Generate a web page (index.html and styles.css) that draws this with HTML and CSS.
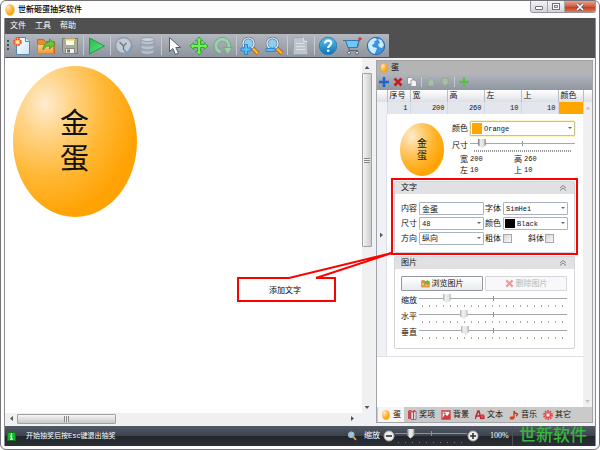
FILE: index.html
```html
<!DOCTYPE html>
<html lang="zh-CN">
<head>
<meta charset="utf-8">
<title>世新砸蛋抽奖软件</title>
<link rel="stylesheet" href="styles.css">
</head>
<body>
<svg class="defs" aria-hidden="true">
  <defs>
    <radialGradient id="egg" cx="0.26" cy="0.25" r="0.75" fx="0.26" fy="0.25"><stop offset="0" stop-color="#ffedcf"/><stop offset="0.25" stop-color="#ffd68f"/><stop offset="0.65" stop-color="#ffb733"/><stop offset="1" stop-color="#ffa305"/></radialGradient>
    <linearGradient id="blue" x2="0" y2="1"><stop offset="0" stop-color="#5cc4ee"/><stop offset="1" stop-color="#0b6fb4"/></linearGradient>
    <linearGradient id="folder" x2="0" y2="1"><stop offset="0" stop-color="#ffd28a"/><stop offset="1" stop-color="#f2983a"/></linearGradient>
    <linearGradient id="play" x2="1" y2="1"><stop offset="0" stop-color="#2fb54c"/><stop offset="1" stop-color="#5fe884"/></linearGradient>
    <linearGradient id="paper" x2="1" y2="1"><stop offset="0" stop-color="#ffffff"/><stop offset="1" stop-color="#cfe4f6"/></linearGradient>
    <symbol id="i-egg" viewBox="0 0 10 12"><ellipse cx="5" cy="6" rx="4.3" ry="5.5" fill="url(#egg)" stroke="#f09a10" stroke-width=".4"/></symbol>
    <symbol id="i-open" viewBox="0 0 20 20"><path d="M1.500 3.500h6l1.500 2h9.500v12h-17z" fill="#e98c2f" stroke="#c96c18"/><path d="M1.500 8.500h16v9h-16z" fill="url(#folder)" stroke="#dd8426"/><path d="M7 14c0-5 3-8 6.500-8V3l6 5-6 5v-3.200c-3 0-4.500 1.200-6.500 4.200z" fill="#62c838" stroke="#3b9425" stroke-width=".8"/></symbol>
    <symbol id="i-x" viewBox="0 0 10 10"><path d="M1.500 1.500 8.500 8.500M8.500 1.500 1.500 8.500" stroke="currentColor" stroke-width="2.500"/></symbol>
    <symbol id="i-up" viewBox="0 0 8 6"><path d="M1 3 4 .5 7 3M1 5.500 4 3 7 5.500" fill="none" stroke="#777" stroke-width=".9"/></symbol>
    <symbol id="i-lens" viewBox="0 0 20 20"><path d="m12.500 12 5.500 5.500" stroke="#b35f10" stroke-width="4"/><path d="m12.800 12.300 5 5" stroke="#ffb52e" stroke-width="2.500"/><circle cx="8.500" cy="7.500" r="5.500" fill="#8ccdf5" stroke="#607587" stroke-width="2.400"/><circle cx="8.500" cy="7.500" r="5.500" fill="none" stroke="#edf5fa" stroke-width="1.200"/></symbol>
  </defs>
</svg>
<div class="window">
  <header class="titlebar">
    <svg class="app-icon"><use href="#i-egg"/></svg>
    <h1>世新砸蛋抽奖软件</h1>
    <div class="caption">
      <button aria-label="最小化"><svg viewBox="0 0 16 12"><rect x="4.500" y="5.500" width="7" height="3" rx=".5" fill="#fff" stroke="#6d6e7a"/></svg></button>
      <button aria-label="最大化"><svg viewBox="0 0 16 12"><rect x="4.500" y="2.500" width="7" height="6" fill="#fff" stroke="#6d6e7a"/><rect x="6.500" y="4.500" width="3" height="2" fill="#ddd" stroke="#6d6e7a" stroke-width=".8"/></svg></button>
      <button class="close" aria-label="关闭"><svg viewBox="0 0 16 12"><path d="m5 3 6 6m0-6-6 6" stroke="#555065" stroke-width="3"/><path d="m5 3 6 6m0-6-6 6" stroke="#fff" stroke-width="1.700"/></svg></button>
    </div>
  </header>
  <div class="client">
    <nav class="menu"><button>文件</button><button>工具</button><button>帮助</button></nav>
    <div class="toolstrip">
      <div class="toolbar">
        <i class="grip"></i>
        <button aria-label="新建"><svg viewBox="0 0 20 20"><path d="M4.500 1.500h9l4 4v13h-13z" fill="url(#paper)" stroke="#5b84ad"/><path d="M13.500 1.500v4h4" fill="#dcebf8" stroke="#5b84ad"/><circle cx="5.500" cy="6" r="3.300" fill="#ffc53a" stroke="#f04e37" stroke-width="2" stroke-dasharray="1.800 .8"/><circle cx="5.500" cy="6" r="1.500" fill="#fff4a8"/></svg></button>
        <button aria-label="打开"><svg><use href="#i-open"/></svg></button>
        <button aria-label="保存"><svg viewBox="0 0 20 20"><path d="M2.500 2.500h15v15h-13l-2-2z" fill="#a9aca0" stroke="#777b73"/><path d="M5.500 2.500h9v7h-9z" fill="#fffef0" stroke="#b8a870"/><path d="M5 3h10v1.500H5z" fill="#f2cf54"/><path d="M5.500 12.500h9v5h-9z" fill="#f0f0ec" stroke="#85897f"/><path d="M7 13.500h3v3H7z" fill="#6e736b"/></svg></button>
        <i class="sep"></i>
        <button aria-label="开始"><svg viewBox="0 0 20 20"><path d="M2.500 2 17.500 10 2.500 18z" fill="url(#play)" stroke="#1d9a49"/></svg></button>
        <i class="sep"></i>
        <button aria-label="历史"><svg viewBox="0 0 20 20"><circle cx="9.500" cy="9.500" r="8" fill="#c2cad3" stroke="#909aa5" stroke-width="1.500"/><path d="m5.500 6 4 4 3-3M9.500 10v4" fill="none" stroke="#65778a" stroke-width="1.300"/><path d="m10 14 3 3.500 6-8" fill="none" stroke="#7d9cc0" stroke-width="2"/></svg></button>
        <button aria-label="数据"><svg viewBox="0 0 20 20"><g fill="#b9c3ce" stroke="#929dab"><path d="M3 13.500v2.500c0 3 13 3 13 0v-2.500z"/><ellipse cx="9.500" cy="13" rx="6.500" ry="2"/><path d="M3 8.500v3c0 3 13 3 13 0v-3z"/><ellipse cx="9.500" cy="8" rx="6.500" ry="2"/><path d="M3 3.500v3c0 3 13 3 13 0v-3z"/><ellipse cx="9.500" cy="3.500" rx="6.500" ry="2" fill="#cbd3dc"/></g></svg></button>
        <i class="sep"></i>
        <button aria-label="选择"><svg viewBox="0 0 20 20"><path d="M4.500 1.500v14l3.300-3 2.700 6 3-1.400-2.700-5.600h4.700z" fill="#fff" stroke="#4c5c70"/></svg></button>
        <button aria-label="移动"><svg viewBox="0 0 20 20"><path d="m10 1 3.500 3.800h-2v3.700h3.700v-2L19 10l-3.800 3.500v-2h-3.700v3.700h2L10 19l-3.500-3.800h2v-3.700H4.800v2L1 10l3.800-3.500v2h3.700V4.800h-2z" fill="#6df24f" stroke="#279d31" stroke-width=".9"/></svg></button>
        <button aria-label="旋转"><svg viewBox="0 0 20 20"><path d="M7.500 16A6.500 6.500 0 1 1 15.500 12" fill="none" stroke="#6fa480" stroke-width="4.500"/><path d="M7.500 16A6.500 6.500 0 1 1 15.500 12" fill="none" stroke="#a0cfab" stroke-width="3"/><path d="M10.500 11.500H19.500L14.500 18.500z" fill="#a0cfab" stroke="#6fa480" stroke-width=".8"/></svg></button>
        <i class="sep"></i>
        <button aria-label="放大"><svg viewBox="0 0 20 20"><use href="#i-lens"/><path d="M4.500 8.500h3v3.500H11v3H7.500v3.500h-3V15H1v-3h3.500z" fill="#58bdf5" stroke="#2876bd" stroke-width=".8"/></svg></button>
        <button aria-label="缩小"><svg viewBox="0 0 20 20"><use href="#i-lens"/><path d="M2 12.500h9v3H2z" fill="#58bdf5" stroke="#2876bd" stroke-width=".8"/></svg></button>
        <i class="sep"></i>
        <button aria-label="文档"><svg viewBox="0 0 20 20"><path d="M2.500 1.500h10l4 4v13h-14z" fill="#bdc4cd" stroke="#9ba5b0"/><path d="M12.500 1.500v4h4M5 7.500h8M5 10.500h9M5 13.500h9" fill="none" stroke="#dce1e6"/></svg></button>
        <i class="sep"></i>
        <button aria-label="说明"><svg viewBox="0 0 20 20"><circle cx="10" cy="10" r="8.700" fill="url(#blue)" stroke="#2584bb"/><path d="M7 7.500c0-4 6.200-3.600 6.200-.4 0 2.300-3 2.300-3 5" fill="none" stroke="#fff" stroke-width="2.200"/><circle cx="10.200" cy="14.800" r="1.300" fill="#fff"/></svg></button>
        <button aria-label="购买"><svg viewBox="0 0 20 20"><path d="M1 4.500h3l3.500 10h8.500" fill="none" stroke="#5c6877" stroke-width="1.200"/><path d="M3.500 4.500H17L15 11.500H6z" fill="#6fc7f5" stroke="#3479b5"/><path d="m15.500 11.500 2-8.500" stroke="#5c6877"/><circle cx="18" cy="2.800" r="1.600" fill="#e12e22"/><circle cx="7" cy="16.800" r="1.500" fill="#eee" stroke="#5c6877"/><circle cx="15" cy="16.800" r="1.500" fill="#eee" stroke="#5c6877"/></svg></button>
        <button aria-label="网站"><svg viewBox="0 0 20 20"><circle cx="10" cy="10" r="8.700" fill="#3b91e0" stroke="#2f6cae"/><path d="M2 9C2.500 5 6 2 9.500 2l1.500 2-3 1.500L9 7 6 9l1 2 4 1-1 3-1.500 3C5 17 2.500 14 2 9zM12 3l3.500 1L18 9l-2 3-3-1-1-3 2-1z" fill="#c9ecfa"/></svg></button>
      </div>
    </div>
    <main class="workspace">
      <section class="canvas">
        <div class="page">
          <div class="golden-egg"><svg viewBox="0 0 124 151" preserveAspectRatio="none"><ellipse cx="62" cy="75.500" rx="62" ry="75.500" fill="url(#egg)"/></svg><span>金蛋</span></div>
        </div>
        <div class="vscroll"><i class="tri up"></i><div class="thumb"><i></i></div><i class="tri down"></i></div>
        <div class="hscroll"><i class="tri left"></i><div class="thumb"><i></i></div><i class="tri right"></i></div>
      </section>
      <aside class="panel">
        <h2><svg><use href="#i-egg"/></svg>蛋</h2>
        <div class="panel-tools">
          <button aria-label="添加"><svg viewBox="0 0 10 10"><path d="M5 0v10M0 5h10" stroke="#1f63cf" stroke-width="2.600"/></svg></button>
          <button class="red" aria-label="删除"><svg><use href="#i-x"/></svg></button>
          <button aria-label="复制"><svg viewBox="0 0 10 10"><g fill="#f5f5f5" stroke="#8f8f8f" stroke-width=".8"><path d="M.5.500h4l1.500 1.500v5H.5z"/><path d="M4 3h3.500L9.500 5v4.500H4z"/></g></svg></button>
          <i class="sep"></i>
          <button aria-label="上移"><svg viewBox="0 0 10 10"><path d="m5 1 4 4H8v4H2V5H1z" fill="#a9bda7" stroke="#8ba48a" stroke-width=".8"/></svg></button>
          <button aria-label="下移"><svg viewBox="0 0 10 10"><path d="M5 9 1 5h1V1h6v4h1z" fill="#a9bda7" stroke="#8ba48a" stroke-width=".8"/></svg></button>
          <i class="sep"></i>
          <button aria-label="移动"><svg viewBox="0 0 10 10"><path d="M5 1v8M1 5h8" stroke="#55c33b" stroke-width="2"/><path d="m5 0 2 2H3zM5 10 3 8h4zM0 5l2-2v4zM10 5 8 7V3z" fill="#55c33b"/></svg></button>
        </div>
        <table>
          <colgroup><col class="c-edge"><col class="c-no"><col><col><col><col><col class="c-color"><col class="c-end"></colgroup>
          <thead><tr><th></th><th>序号</th><th>宽</th><th>高</th><th>左</th><th>上</th><th>颜色</th><th></th></tr></thead>
          <tbody><tr><td class="edge"></td><td>1</td><td>200</td><td>260</td><td>10</td><td>10</td><td class="orange"></td><td class="end"><i class="tri up"></i></td></tr></tbody>
        </table>
        <div class="panel-body">
          <div class="detail">
            <div class="strip"><i class="tri right"></i></div>
            <div class="form">
              <div class="egg-form">
                <div class="mini-egg"><svg viewBox="0 0 124 151" preserveAspectRatio="none"><ellipse cx="62" cy="75.500" rx="62" ry="75.500" fill="url(#egg)"/></svg><span>金蛋</span></div>
                <div class="egg-fields">
                  <div class="line"><label for="egg-color">颜色</label><span class="pick tall"><i class="swatch orange"></i><select id="egg-color" class="with-swatch"><option>Orange</option></select></span></div>
                  <div class="line"><label for="egg-size">尺寸</label><input class="range fine" id="egg-size" type="range" value="8"></div>
                  <dl><dt>宽</dt><dd>200</dd><dt>高</dt><dd>260</dd><dt>左</dt><dd>10</dd><dt>上</dt><dd>10</dd></dl>
                </div>
              </div>
              <section class="group">
                <h3>文字<svg><use href="#i-up"/></svg></h3>
                <div class="text-fields">
                  <label for="t-content">内容</label><input id="t-content" type="text" value="金蛋">
                  <label for="t-font">字体</label><span class="pick"><select id="t-font"><option>SimHei</option></select></span>
                  <label for="t-size">尺寸</label><span class="pick"><select id="t-size"><option>48</option></select></span>
                  <label for="t-color">颜色</label><span class="pick"><i class="swatch black"></i><select id="t-color" class="with-swatch"><option>Black</option></select></span>
                  <label for="t-dir">方向</label><span class="pick"><select id="t-dir" class="cjk"><option>纵向</option></select></span>
                  <label for="t-bold">粗体</label><div class="checks"><input id="t-bold" type="checkbox"><label for="t-italic">斜体</label><input id="t-italic" type="checkbox"></div>
                </div>
              </section>
              <section class="group">
                <h3>图片<svg><use href="#i-up"/></svg></h3>
                <div class="picture-fields">
                  <div class="buttons"><button><svg><use href="#i-open"/></svg>浏览图片</button><button disabled><svg><use href="#i-x"/></svg>删除图片</button></div>
                  <div class="line"><label for="p-zoom">缩放</label><input class="range" id="p-zoom" type="range" value="17" disabled></div>
                  <div class="line"><label for="p-x">水平</label><input class="range" id="p-x" type="range" value="29" disabled></div>
                  <div class="line"><label for="p-y">垂直</label><input class="range" id="p-y" type="range" value="30" disabled></div>
                </div>
              </section>
            </div>
          </div>
          <div class="panel-scroll"><i class="tri down"></i></div>
        </div>
        <div class="tabs">
          <button class="on"><svg><use href="#i-egg"/></svg>蛋</button>
          <button><svg viewBox="0 0 10 10"><path d="M1 2h3v7H1z" fill="#d8443e"/><path d="M4 1.500h5v8H4z" fill="#e9edf5" stroke="#4c6ca0" stroke-width=".8"/><path d="M6.500 1.500v8M1 2l2-1.500 3 1.500 2-2" fill="none" stroke="#d43a36" stroke-width="1.300"/></svg>奖项</button>
          <button><svg viewBox="0 0 10 10"><path d="M1 1h8v8H1z" fill="#fff" stroke="#d13d3d" stroke-width="1.300"/><path d="m1 9 3-5 2 2 3-3v6zM2.500 2.500h2V4h-2z" fill="#d13d3d"/></svg>背景</button>
          <button><svg viewBox="0 0 10 10"><path d="M0 9 3 1h1l2 8M1 6h4" fill="none" stroke="#c2272d" stroke-width="1.500"/><path d="M6 5.500q3-1.500 3 1V9M9 7q-3-.5-3 1 .5 1.500 3 0" fill="none" stroke="#c2272d" stroke-width="1.200"/></svg>文本</button>
          <button><svg viewBox="0 0 10 10"><ellipse cx="3" cy="8" rx="2.500" ry="1.800" fill="#e0421e"/><path d="M5 8V1q.5 2.500 3.500 3-.5 2-1.500 2" fill="none" stroke="#c92f1a" stroke-width="1.300"/></svg>音乐</button>
          <button><svg viewBox="0 0 10 10"><circle cx="5" cy="5" r="4" fill="none" stroke="#dc4848" stroke-width="1.800" stroke-dasharray="1.600 .9"/><circle cx="5" cy="5" r="2.500" fill="#f7b5b1" stroke="#dc4848" stroke-width="1.200"/><circle cx="5" cy="5" r="1" fill="#fff"/></svg>其它</button>
        </div>
        <svg class="callout" viewBox="0 0 346 130"><g fill="none" stroke="#f00" stroke-width="2"><rect x="156" y="2" width="185" height="75"/><path d="M53 101H2v23h97v-23H80L156 76z" fill="#fff"/></g><text x="33" y="116">添加文字</text></svg>
      </aside>
    </main>
    <footer class="status">
      <svg class="info" viewBox="0 0 10 10"><path d="M.5.500h9v9h-9z" fill="#10b828" stroke="#087c18"/><path d="M5 1.500v1.500M3.500 4.500H5V8M3.500 8h3" fill="none" stroke="#fff" stroke-width="1.400"/></svg>
      <p>开始抽奖后按Esc键退出抽奖</p>
      <svg class="lens"><use href="#i-lens"/></svg>
      <label for="zoom">缩放</label>
      <button aria-label="缩小"><svg viewBox="0 0 12 12"><circle cx="6" cy="6" r="5" fill="#eee" stroke="#aaa"/><path d="M3 6h6" stroke="#333" stroke-width="1.600"/></svg></button>
      <input class="range zoom" id="zoom" type="range" value="18">
      <button aria-label="放大"><svg viewBox="0 0 12 12"><circle cx="6" cy="6" r="5" fill="#eee" stroke="#aaa"/><path d="M3 6h6M6 3v6" stroke="#333" stroke-width="1.600"/></svg></button>
      <output for="zoom">100%</output>
      <strong>世新软件</strong>
    </footer>
  </div>
</div>
</body>
</html>
```
FILE: styles.css
```css
* { box-sizing: border-box; }

body, h1, h2, h3, p, dl, dd { margin: 0; }

body, button, input, select {
  font-family: "Liberation Sans", "Noto Sans CJK SC", sans-serif;
  font-size: 8px;
  line-height: 10px;
  color: #111;
}

body { background: #fff; }
h1, h2, h3 { font-size: 8px; font-weight: 400; }
button { border: 0; padding: 0; background: none; }
svg { display: block; flex: none; }
.defs { position: absolute; width: 0; height: 0; }

.window {
  display: flex;
  flex-direction: column;
  min-height: 100vh;
  padding: 0 3px 3px;
  border: 1px solid #747478;
  border-radius: 6px;
  background: #fdfdfd;
}

/* Title bar */
.titlebar { display: flex; align-items: center; height: 17px; padding-left: 1px; }
.app-icon { width: 10px; height: 12px; margin-right: 3px; }
.titlebar h1 { flex: 1; font-weight: 500; color: #000; }
.caption {
  display: flex;
  align-self: flex-start;
  height: 12px;
  border: 1px solid #96969c;
  border-top: 0;
  border-radius: 0 0 3px 3px;
  overflow: hidden;
}
.caption button { width: 17px; border-right: 1px solid #a5a5ab; background: linear-gradient(#f4f4f6, #d3d3da); }
.caption button svg { width: 16px; height: 12px; }
.caption .close { width: 30px; border: 0; background: linear-gradient(#e9a394, #d05a40 50%, #c13b20 55%, #de7a55); }
.close svg { margin: 0 auto; }

.client {
  display: flex;
  flex: 1;
  flex-direction: column;
  border: 1px solid #8c8c90;
  border-width: 0 1px;
}

/* Menu and toolbar */
.menu { display: flex; gap: 9px; height: 16px; padding-left: 5px; background: #505050; }
.menu button { color: #fff; }
.toolstrip { display: flex; height: 24px; background: #505050; border-bottom: 1px solid #465362; }
.toolbar {
  display: flex;
  align-items: center;
  gap: 4px;
  width: 384px;
  padding-left: 2px;
  background: linear-gradient(#b3b7bf, #8e959f);
}
.toolbar svg { width: 20px; height: 20px; }
.grip {
  width: 2px;
  height: 12px;
  margin-right: -1px;
  background: repeating-linear-gradient(#444a52 0 2px, transparent 2px 4px);
}
.sep { width: 1px; height: 19px; margin: 0 -1px; background: #c6cad0; }

/* Triangular arrows */
.tri { display: block; width: 5px; height: 3px; background: #505866; clip-path: polygon(50% 0, 100% 100%, 0 100%); }
.tri.down { clip-path: polygon(0 0, 100% 0, 50% 100%); }
.tri.left, .tri.right { width: 3px; height: 5px; }
.tri.left { clip-path: polygon(100% 0, 100% 100%, 0 50%); }
.tri.right { clip-path: polygon(0 0, 100% 50%, 0 100%); }

/* Canvas */
.workspace { display: flex; flex: 1; gap: 4px; padding-right: 2px; background: #f0f1f4; }
.canvas { display: grid; flex: 1; grid-template: 1fr 11px 2px / 1fr 10px; }
.page { padding: 8px; background: #fff; }
.golden-egg, .mini-egg { display: grid; place-items: center; }
.golden-egg > *, .mini-egg > * { grid-area: 1 / 1; }
.golden-egg { width: 124px; height: 151px; }
.golden-egg svg { width: 124px; height: 151px; }
.golden-egg span { width: 30px; font-size: 29px; line-height: 35px; }
.vscroll, .hscroll { display: flex; align-items: center; background: #f0f0f0; }
.vscroll { flex-direction: column; padding: 8px 0 4px; }
.vscroll .thumb { flex: 0 0 174px; width: 10px; margin-top: 4px; margin-bottom: auto; background: linear-gradient(90deg, #f4f4f4, #ccc); }
.hscroll { padding: 0 8px 0 5px; }
.hscroll .thumb { flex: 0 0 99px; height: 10px; margin-left: 4px; margin-right: auto; background: linear-gradient(#f6f6f6, #c8c8c8); }
.thumb { display: grid; place-items: center; border: 1px solid #a2a2a2; border-radius: 1px; }
.vscroll .thumb i { width: 6px; height: 5px; background: repeating-linear-gradient(#888 0 1px, #eee 1px 2px); }
.hscroll .thumb i { width: 5px; height: 6px; background: repeating-linear-gradient(90deg, #888 0 1px, #eee 1px 2px); }

/* Property panel */
.panel {
  position: relative;
  display: flex;
  flex-direction: column;
  width: 217px;
  margin: 2px 0 3px;
  border: 1px solid #a4a4a4;
  background: #fff;
}
.panel h2 { display: flex; align-items: center; gap: 3px; height: 13px; padding-left: 3px; background: #b4b4b4; }
.panel h2 svg { width: 8px; height: 10px; }
.panel-tools { display: flex; align-items: center; gap: 4px; height: 16px; padding-left: 2px; background: linear-gradient(#b1b4bb, #8f96a1); }
.panel-tools svg { width: 10px; height: 10px; }
.panel-tools .sep { height: 10px; margin: 0; }
.red { color: #c81d20; }

table { width: 100%; table-layout: fixed; border-collapse: collapse; }
.c-edge { width: 10px; }
.c-no { width: 23px; }
.c-color { width: 25px; }
.c-end { width: 9px; }
th, td { height: 12px; padding: 0 2px; line-height: 10px; font-weight: 400; }
th { text-align: left; border-right: 1px solid #b9bdc6; background: linear-gradient(#fff, #dddfe5); white-space: nowrap; }
th:last-child { border: 0; }
td { text-align: right; font-family: "Liberation Mono", monospace; font-size: 7px; background: #e4e6ed; border-right: 1px solid #d5d8e2; }
td.edge { background: #eef0f6; }
td.end { border: 0; background: #f0f0f0; }
.orange, td.orange { background: #ffa500; }
.black { background: #000; }

.panel-body { display: flex; flex: 1; align-items: flex-start; }
.detail { display: flex; flex: 1; min-width: 0; border-bottom: 1px solid #dfe0e8; }
.strip { display: grid; place-items: center; width: 10px; background: #eff1f6; border-right: 1px solid #dfe0e8; }
.form { flex: 1; min-width: 0; padding: 7px 8px 7px 7px; }
.panel-scroll { display: flex; align-self: stretch; align-items: flex-end; justify-content: center; width: 9px; padding-bottom: 4px; background: #f0f0f0; }
.panel-scroll .tri, td .tri { background: #c4c4c4; }

.egg-form { display: flex; gap: 8px; padding-left: 6px; height: 60px; }
.mini-egg { width: 44px; height: 53px; margin-top: 2px; }
.mini-egg svg { width: 44px; height: 53px; }
.mini-egg span { width: 10px; font-size: 10px; line-height: 12px; }
.egg-fields { flex: 1; min-width: 0; }
.line { display: flex; align-items: center; }
.line label { width: 18px; white-space: nowrap; }
.egg-fields .line:first-child { height: 15px; margin-bottom: 2px; }
dl { display: grid; grid-template-columns: 18px 44px 10px 1fr; line-height: 11px; }
dt { padding-right: 2px; text-align: right; }
dd { font-family: "Liberation Mono", monospace; font-size: 7px; }
dt, dd { height: 11px; }

/* Form controls */
.pick { position: relative; display: block; flex: 1; min-width: 0; }
.pick::after {
  content: "";
  position: absolute;
  top: 5px;
  right: 3px;
  width: 4px;
  height: 2px;
  background: #666;
  clip-path: polygon(0 0, 100% 0, 50% 100%);
  pointer-events: none;
}
.pick.tall::after { top: 6px; }
select, input[type="text"] {
  display: block;
  width: 100%;
  height: 13px;
  padding: 0 2px;
  border: 1px solid #a9b3c2;
  border-radius: 1px;
  background: #fff;
  appearance: none;
}
select { font-family: "Liberation Mono", "Noto Sans CJK SC", monospace; font-size: 7px; }
select.cjk { font-size: 8px; }
select.with-swatch { padding-left: 13px; }
.tall select { height: 15px; border-color: #c9c18c; box-shadow: 0 0 0 1px #fdf3c2; }
.swatch { position: absolute; top: 2px; left: 2px; width: 10px; height: 9px; }
.tall .swatch { height: 11px; }
input[type="checkbox"] { width: 9px; height: 9px; margin: 0; border: 1px solid #a7a7a7; background: linear-gradient(135deg, #d5d5d5, #fafafa); appearance: none; }

.range {
  flex: 1;
  min-width: 0;
  height: 16px;
  margin: 0;
  appearance: none;
  background:
    linear-gradient(#a6a6ae, #a6a6ae) 0 5px / 100% 1px no-repeat,
    linear-gradient(#8c8c98, #8c8c98) 50% 3px / 1px 5px no-repeat,
    repeating-linear-gradient(90deg, transparent 0 3px, #aaa 3px 4px, transparent 4px 7px) 0 12px / 100% 2px no-repeat;
}
.range.fine {
  background:
    linear-gradient(#a6a6ae, #a6a6ae) 0 5px / 100% 1px no-repeat,
    linear-gradient(#8c8c98, #8c8c98) 50% 3px / 1px 5px no-repeat,
    repeating-linear-gradient(90deg, transparent 0 1px, #999 1px 2px) 3px 12px / 98px 2px no-repeat;
}
.range::-webkit-slider-thumb {
  width: 8px;
  height: 10px;
  margin-bottom: 5px;
  border: 0;
  appearance: none;
  background: linear-gradient(90deg, #888 1px, #eee 2px, #ddd 6px, #888 7px);
  clip-path: polygon(0 0, 100% 0, 100% 65%, 50% 100%, 0 65%);
}
.range:disabled::-webkit-slider-thumb { background: linear-gradient(90deg, #bbb 1px, #f0f0f0 2px, #e4e4e4 6px, #bbb 7px); }

/* Groups */
.group { border: 1px solid #d3d5dc; border-radius: 2px; }
.group + .group { margin-top: 3px; }
.group h3 { display: flex; align-items: center; justify-content: space-between; height: 12px; padding: 0 7px 0 6px; background: #e1e1e3; }
.group h3 svg { width: 8px; height: 6px; }
.text-fields { display: grid; grid-template-columns: 17px 65px 17px 65px; column-gap: 1px; row-gap: 2px; align-items: center; padding: 8px 0 7px 6px; white-space: nowrap; }
.checks { display: flex; align-items: center; }
.checks label { margin: 0 1px 0 16px; }
.picture-fields { padding: 7px 7px 7px 6px; }
.buttons { display: flex; gap: 2px; margin-bottom: 2px; }
.buttons button { display: flex; flex: 1; align-items: center; justify-content: center; gap: 2px; height: 15px; border: 1px solid #9297a2; border-radius: 1px; background: linear-gradient(#fff, #e8eaee); white-space: nowrap; }
.buttons svg { width: 9px; height: 9px; }
.buttons button:disabled { border-color: #d4d6dc; background: #f8f8fa; color: #aebbb1; }
.buttons button:disabled svg { color: #ef9a96; }

/* Bottom tabs */
.tabs { display: flex; height: 15px; padding-left: 1px; background: #cacaca; }
.tabs button { display: flex; align-items: center; gap: 2px; padding: 0 3px; white-space: nowrap; }
.tabs svg { width: 10px; height: 10px; }
.tabs .on { background: #f5f5f5; }

/* Annotation pointing at the text group */
.callout { position: absolute; top: 116px; right: 10px; width: 346px; height: 130px; pointer-events: none; }
.callout text { font-size: 8px; fill: #000; }

/* Status bar */
.status { display: flex; align-items: center; height: 20px; background: linear-gradient(#535b66, #3b424c 50%, #22262c 52%, #2b3037); color: #fff; }
.info { width: 9px; height: 9px; margin: 0 10px 0 2px; }
.status p { flex: 1; font-family: "Liberation Mono", "Noto Sans CJK SC", monospace; font-size: 7px; }
.lens { width: 10px; height: 10px; margin-right: 7px; }
.status label { margin-right: 3px; }
.status button svg { width: 12px; height: 12px; }
.range.zoom {
  flex: 0 0 72px;
  background:
    linear-gradient(#8a929c, #8a929c) 0 5px / 100% 1px no-repeat,
    linear-gradient(#8a929c, #8a929c) 50% 3px / 1px 5px no-repeat,
    repeating-linear-gradient(90deg, #778 0 1px, transparent 1px 7px) 3px 14px / 66px 1px no-repeat;
}
.status output { width: 33px; padding-left: 11px; font-family: "Liberation Serif", serif; font-size: 8px; }
.status strong { width: 83px; padding-left: 6px; border-left: 1px solid #4a5058; font-size: 17px; font-weight: 500; line-height: 20px; color: #35b83a; }
```
